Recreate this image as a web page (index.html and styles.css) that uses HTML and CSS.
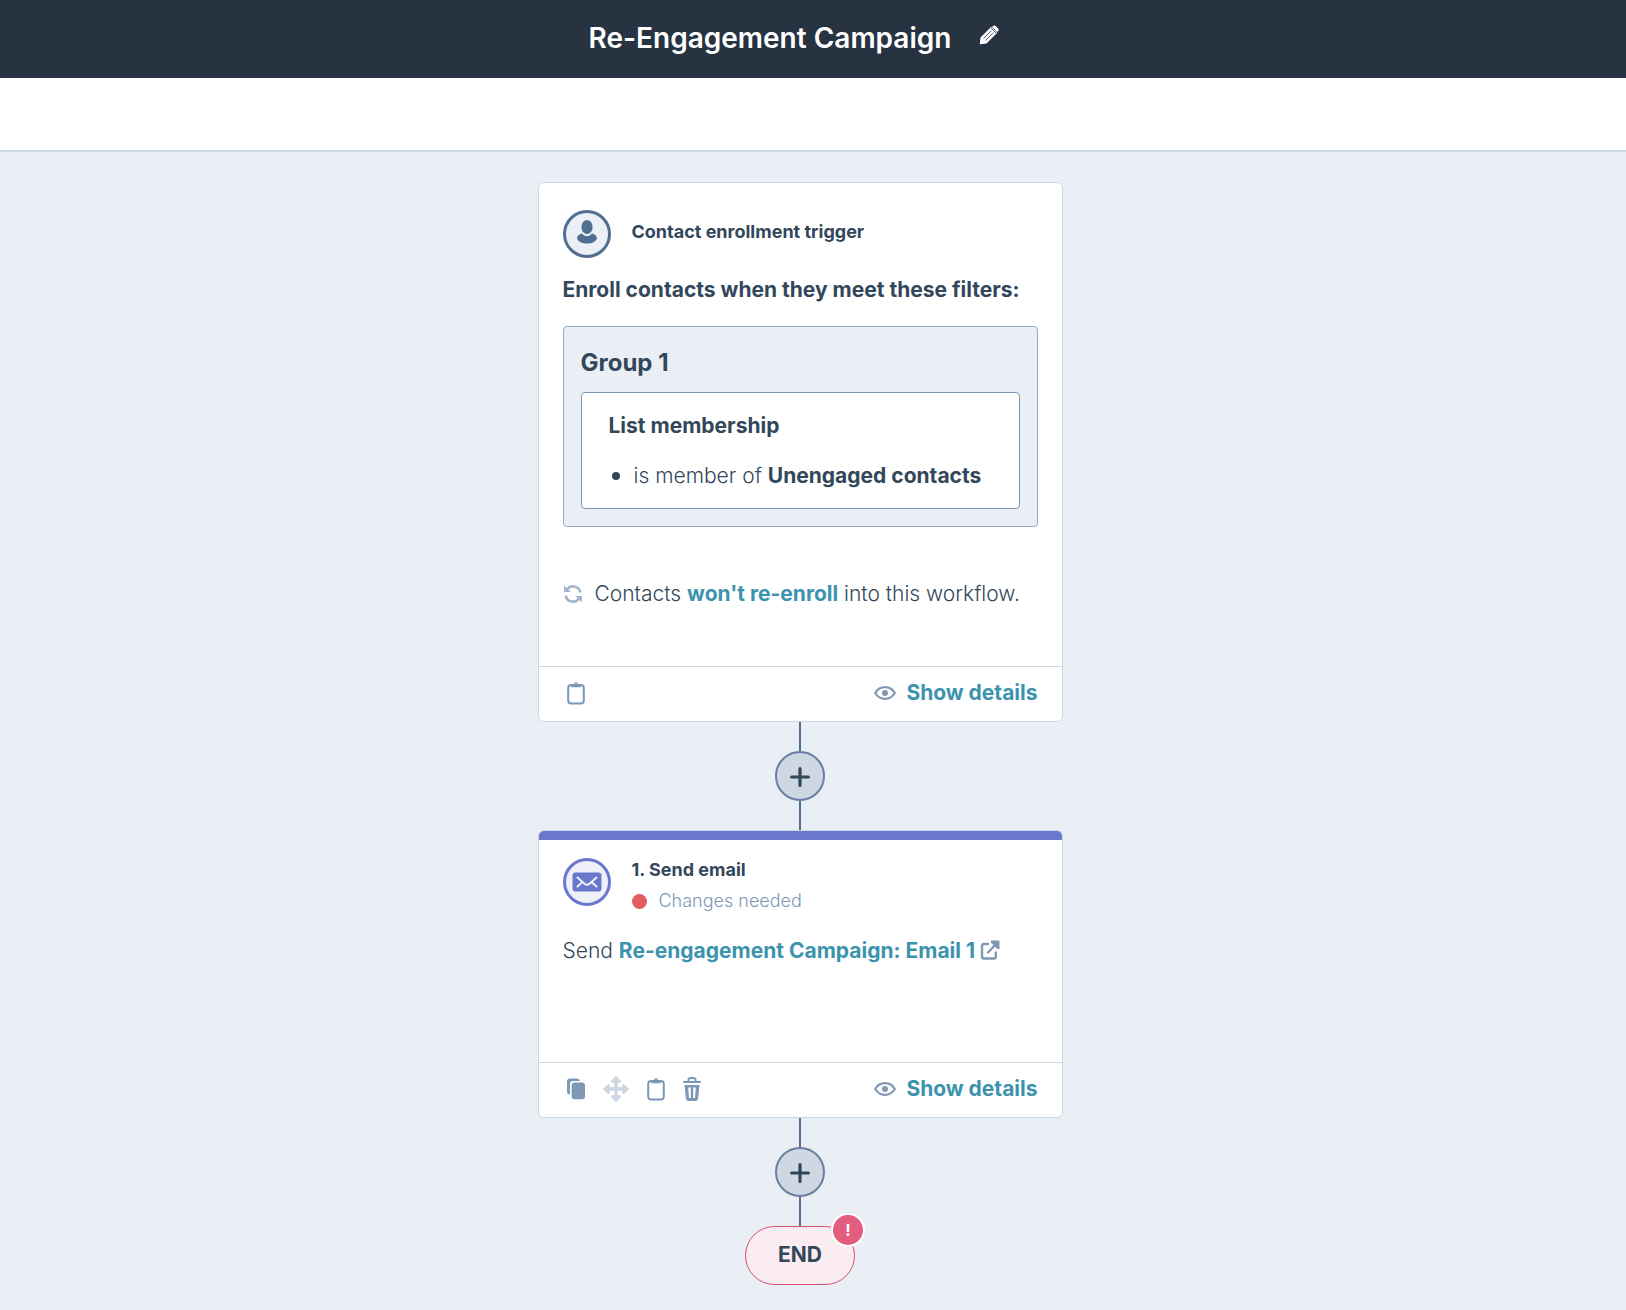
FILE: index.html
```html
<!DOCTYPE html>
<html lang="en">
<head>
  <meta charset="UTF-8" />
  <title>Re-Engagement Campaign</title>
  <meta name="viewport" content="width=device-width, initial-scale=1" />
  <link rel="stylesheet" href="styles.css">
</head>
<body>
  <!-- shared icons -->
  <svg class="sprite" aria-hidden="true">
    <symbol id="clipboard" viewBox="0 0 18 24">
      <rect x="1.2" y="4" width="15.6" height="18.4" rx="3" fill="none" stroke="currentColor" stroke-width="2" />
      <path fill="currentColor" fill-rule="evenodd" d="M4.2 6.2V4.6L6.8 3a2.3 2.3 0 0 1 4.4 0l2.6 1.6v1.6zM9 2.4a.9.9 0 1 0 0 1.8.9.9 0 0 0 0-1.8z" />
    </symbol>
    <symbol id="eye" viewBox="0 0 22 14">
      <path fill="none" stroke="currentColor" stroke-width="2.2" stroke-linejoin="round" d="M1.2 7C3.6 3 7 1.2 11 1.2S18.400 3 20.800 7C18.400 11 15 12.800 11 12.800S3.600 11 1.200 7z" />
      <circle cx="11" cy="7" r="3" fill="currentColor" />
    </symbol>
    <symbol id="plus" viewBox="0 0 20 20">
      <path fill="none" stroke="currentColor" stroke-width="3.2" stroke-linecap="round" d="M10 1.600v16.800M1.600 10h16.800" />
    </symbol>
  </svg>

  <header class="topbar">
    <h1>Re-Engagement Campaign</h1>
    <button type="button" class="icon-btn edit" aria-label="Edit name">
      <svg width="20" height="20" viewBox="0 0 20 20">
        <path fill="#fff" d="M.8 19.200l.7-6.700L12.300 1.800l5.900 5.900L7.500 18.500z" />
        <path fill="#fff" d="M13 1.800l1-.9a2 2 0 0 1 2.600.1l2.500 2.500a2 2 0 0 1 0 2.600l-1 1z" />
        <path fill="none" stroke="#273341" stroke-width=".8" d="M4.500 13.500l8-7.800M6.500 15.500l8-7.800M12 3l5 5" />
      </svg>
    </button>
  </header>
  <div class="toolbar"></div>

  <main class="canvas">
    <section class="card">
      <div class="card-body">
        <div class="card-head">
          <span class="avatar contact">
            <svg width="20" height="24" viewBox="0 0 20 24">
              <ellipse cx="10" cy="7" rx="5.6" ry="7" fill="currentColor" />
              <path fill="currentColor" d="M5 13.600c1.200 1.700 3 2.600 5 2.600s3.800-.9 5-2.600c3 .8 4.800 2.200 5 4.600-1 3.400-5 5.400-10 5.400S1 21.600 0 18.200c.2-2.400 2-3.800 5-4.600z" />
            </svg>
          </span>
          <h2>Contact enrollment trigger</h2>
        </div>
        <h3 class="lead">Enroll contacts when they meet these filters:</h3>
        <div class="group">
          <h3>Group 1</h3>
          <div class="filter">
            <h4>List membership</h4>
            <ul>
              <li>is member of <b>Unengaged contacts</b></li>
            </ul>
          </div>
        </div>
        <p class="reenroll">
          <svg width="20" height="20" viewBox="0 0 20 20">
            <path fill="none" stroke="currentColor" stroke-width="2.6" d="M3.400 6.800A7.300 7.300 0 0 1 17.300 8.500M16.600 13.200A7.300 7.300 0 0 1 2.700 11.500" />
            <path fill="currentColor" d="M1 1.500V8h6.800zM19 18.500V12h-6.800z" />
          </svg>
          <span>Contacts <a href="#">won't re-enroll</a> into this workflow.</span>
        </p>
      </div>
      <footer class="card-foot">
        <button type="button" class="icon-btn" aria-label="Add note"><svg width="18" height="24"><use href="#clipboard" /></svg></button>
        <button type="button" class="details"><svg width="22" height="14"><use href="#eye" /></svg>Show details</button>
      </footer>
    </section>

    <div class="connector">
      <button type="button" class="add" aria-label="Add action"><svg width="20" height="20"><use href="#plus" /></svg></button>
    </div>

    <section class="card action">
      <div class="card-body">
        <div class="card-head">
          <span class="avatar email">
            <svg width="30" height="20" viewBox="0 0 30 20">
              <rect x=".5" y=".5" width="29" height="19" rx="3" fill="currentColor" />
              <path fill="none" stroke="#f0f0fa" stroke-width="2" stroke-linecap="round" d="M5.500 5.500l7 6.200q2.500 2 5 0l7-6.200M5.500 14.500l4.200-3.700M24.500 14.500l-4.200-3.700" />
            </svg>
          </span>
          <div>
            <h2>1. Send email</h2>
            <p class="status">Changes needed</p>
          </div>
        </div>
        <p class="message">Send <a href="#">Re-engagement Campaign: Email 1
          <svg width="20" height="20" viewBox="0 0 20 20">
            <path fill="none" stroke="currentColor" stroke-width="2.4" stroke-linecap="round" stroke-linejoin="round" d="M8 4H4Q2 4 2 6v10.500q0 2 2 2h9.800q2 0 2-2V12.500" />
            <path fill="none" stroke="currentColor" stroke-width="2.4" stroke-linecap="round" d="M8 12.500L17 3" />
            <path fill="currentColor" d="M11 .5h7.500q1 0 1 1V9h-2.200L11 2.800z" />
          </svg></a></p>
      </div>
      <footer class="card-foot">
        <div class="tools">
          <button type="button" class="icon-btn" aria-label="Copy">
            <svg width="18" height="22" viewBox="0 0 18 22">
              <path fill="currentColor" d="M3 16.500Q0 16 0 13.500V3.500Q0 .5 3 .5h7q2.500 0 3 2.500H6Q3 3 3 6z" />
              <rect x="4.600" y="4.600" width="13.400" height="16.600" rx="3" fill="currentColor" />
            </svg>
          </button>
          <button type="button" class="icon-btn" aria-label="Move" disabled>
            <svg width="26" height="28" viewBox="0 0 28 28">
              <path fill="none" stroke="currentColor" stroke-width="3.6" d="M14 4v20M4 14h20" />
              <path fill="currentColor" stroke="currentColor" stroke-width="2.6" stroke-linejoin="round" d="M14 1.500L18 6h-8zM14 26.500L18 22h-8zM1.500 14L6 10v8zM26.500 14L22 10v8z" />
            </svg>
          </button>
          <button type="button" class="icon-btn" aria-label="Add note"><svg width="18" height="24"><use href="#clipboard" /></svg></button>
          <button type="button" class="icon-btn" aria-label="Delete">
            <svg width="18" height="24" viewBox="0 0 18 24">
              <path fill="none" stroke="currentColor" stroke-width="2" stroke-linecap="round" d="M1 5h16M5.500 4.500V3q0-2 2-2h3q2 0 2 2v1.500" />
              <path fill="currentColor" fill-rule="evenodd" d="M1.500 8h15l-1.400 13.500q-.3 2.500-2.600 2.500h-7q-2.300 0-2.600-2.500zM5.200 10.500l.8 10.500h1.800V10.500zM10.200 10.500V21H12l.8-10.500z" />
            </svg>
          </button>
        </div>
        <button type="button" class="details"><svg width="22" height="14"><use href="#eye" /></svg>Show details</button>
      </footer>
    </section>

    <div class="connector">
      <button type="button" class="add" aria-label="Add action"><svg width="20" height="20"><use href="#plus" /></svg></button>
    </div>

    <div class="end">END<span class="alert">!</span></div>
  </main>
</body>
</html>
```

FILE: styles.css
```css
* {
  box-sizing: border-box;
}
body {
  margin: 0;
  min-height: 100vh;
  display: flex;
  flex-direction: column;
  background: #eaeff6;
  color: #33475b;
  font-family: Inter, "Open Sans", sans-serif;
  font-size: 21px;
  font-weight: 300;
  line-height: 28px;
}
h1, h2, h3, h4, p, ul {
  margin: 0;
  padding: 0;
}
h2, h3, h4, b, a {
  font-weight: 700;
}
h3, h4 {
  font-size: 21px;
}
svg {
  display: block;
  flex: none;
}
button {
  font: inherit;
  border: none;
  background: none;
  padding: 0;
  cursor: pointer;
}
a {
  color: #3c93ae;
  text-decoration: none;
}
.sprite {
  position: absolute;
  width: 0;
  height: 0;
}
.topbar {
  height: 78px;
  padding: 0 38px 2px 0;
  display: flex;
  align-items: center;
  justify-content: center;
  gap: 28px;
  background: #273341;
}
.topbar h1 {
  color: #fff;
  font-size: 28px;
  font-weight: 600;
  line-height: 36px;
}
.edit {
  padding-bottom: 6px;
}
.toolbar {
  height: 74px;
  background: #fff;
  border-bottom: 2px solid #cfd8e5;
}
.canvas {
  flex: 1;
  display: flex;
  flex-direction: column;
  align-items: center;
  padding: 30px 26px 24px 0;
}
.card {
  width: 525px;
  max-width: 100%;
  background: #fff;
  border: 1px solid #cbd6e2;
  border-radius: 6px;
  overflow: hidden;
}
.card-body {
  padding: 27px 24px 58px;
}
.action .card-body {
  border-top: 9px solid #6a78cc;
  padding: 18px 24px 97px;
}
.card-head {
  display: flex;
  align-items: center;
  gap: 21px;
}
.action .card-head {
  align-items: flex-start;
}
.card-head h2 {
  font-size: 18px;
  line-height: 24px;
}
.card-head > h2 {
  padding-bottom: 4px;
}
.avatar {
  flex: none;
  width: 48px;
  height: 48px;
  border: 3px solid currentColor;
  border-radius: 50%;
  display: flex;
  align-items: center;
  justify-content: center;
}
.contact {
  color: #516f90;
  background: #eaf0f6;
  padding-bottom: 4px;
}
.email {
  color: #6a78cc;
  background: #f0f0fa;
}
.status {
  margin-top: 7px;
  display: flex;
  align-items: center;
  gap: 12px;
  color: #7c98b6;
  font-size: 18px;
  line-height: 24px;
}
.status::before {
  content: "";
  width: 15px;
  height: 15px;
  border-radius: 50%;
  background: #e25c60;
}
.lead {
  margin-top: 18px;
}
.group {
  margin-top: 22px;
  padding: 20px 17px 17px;
  background: #eaeff6;
  border: 1px solid #99acc6;
  border-radius: 4px;
}
.group h3 {
  font-size: 24px;
  line-height: 32px;
}
.filter {
  margin-top: 13px;
  padding: 19px 27px 18px;
  background: #fff;
  border: 1px solid #7c98b6;
  border-radius: 4px;
}
.filter ul {
  margin-top: 22px;
  list-style: none;
}
.filter li {
  display: flex;
  align-items: center;
  white-space: pre-wrap;
}
.filter li::before {
  content: "";
  width: 8px;
  height: 8px;
  margin: 0 14px 0 3px;
  border-radius: 50%;
  background: #33475b;
}
.reenroll {
  margin-top: 53px;
  display: flex;
  align-items: center;
  gap: 12px;
}
.reenroll svg {
  color: #a3b4cb;
}
.message {
  margin-top: 24px;
}
.message svg {
  display: inline-block;
  vertical-align: -2px;
  color: #8097b6;
}
.card-foot {
  height: 55px;
  padding: 0 24px 2px 28px;
  display: flex;
  align-items: center;
  justify-content: space-between;
  border-top: 1px solid #cbd6e2;
}
.tools {
  display: flex;
  align-items: center;
  gap: 18px;
}
.icon-btn {
  color: #7c98b6;
}
.icon-btn:disabled {
  color: #cbd6e2;
  cursor: default;
}
.details {
  display: flex;
  align-items: center;
  gap: 10px;
  color: #3c93ae;
  font-weight: 700;
}
.details svg {
  color: #8097b6;
}
.connector {
  height: 108px;
  display: flex;
  flex-direction: column;
  align-items: center;
}
.connector::before,
.connector::after {
  content: "";
  flex: 1;
  width: 2px;
  background: #516f90;
}
.add {
  width: 50px;
  height: 50px;
  padding-top: 2px;
  display: flex;
  align-items: center;
  justify-content: center;
  color: #33475b;
  background: #cfd7e2;
  border: 2px solid #67809e;
  border-radius: 50%;
}
.end {
  position: relative;
  padding: 14px 32px 15px;
  background: #fbecf1;
  border: 1px solid #d5506f;
  border-radius: 30px;
  font-weight: 700;
}
.alert {
  position: absolute;
  top: -14px;
  right: -11px;
  width: 34px;
  height: 34px;
  border: 2px solid #fff;
  border-radius: 50%;
  background: #e25d7e;
  color: #fff;
  font-size: 16px;
  line-height: 30px;
  text-align: center;
}
```
